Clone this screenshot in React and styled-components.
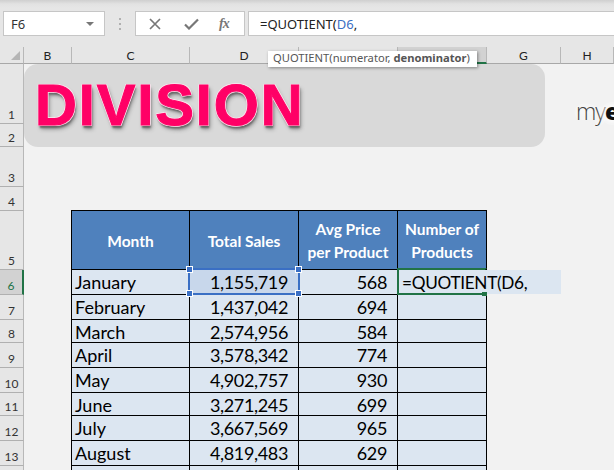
import React from "react";
import styled, { createGlobalStyle } from "styled-components";

const Global = createGlobalStyle`
  html, body { margin: 0; padding: 0; background: #f2f2f2; }
  body { width: 614px; height: 470px; overflow: hidden; font-family: "Lato", "Liberation Sans", sans-serif; }
`;
const Page = styled.div`width: 614px; height: 470px; overflow: hidden; position: relative; display: flex; flex-direction: column;`;
const FormulaStrip = styled.div`
  height: 47px; flex: none; box-sizing: border-box; padding: 11px 0 11px 3px; display: flex; align-items: stretch;
  background: linear-gradient(#cfcfcf 0, #e2e2e2 4px, #e6e6e6 8px);
`;
const Field = styled.div`
  box-sizing: border-box; background: #fff; border: 1px solid #c6c6c6; display: flex; align-items: center;
  font-family: "Noto Sans", sans-serif; font-size: 13px; color: #333;
`;
const NameBox = styled(Field)`width: 102px; padding: 0 7px 0 7px; justify-content: space-between;`;
const Caret = styled.span`width: 0; height: 0; border-left: 4px solid transparent; border-right: 4px solid transparent; border-top: 4px solid #777; margin-right: 3px;`;
const Grip = styled.div`width: 30px; display: flex; align-items: center; justify-content: center; flex: none;`;
const FxBox = styled(Field)`width: 110px; padding: 0 0 0 13px; gap: 0;`;
const FxSlot = styled.span`width: 36px; display: flex; justify-content: flex-start;`;
const CheckSlot = styled(FxSlot)`margin-left: -1px; width: 35px;`;
const FxLabel = styled.span`font-family: "Liberation Serif", serif; font-style: italic; font-weight: 700; font-size: 14px; color: #777; letter-spacing: -1px; margin-left: 0;`;
const FormulaBox = styled(Field)`flex: 1; margin-left: 3px; border-right: 0; padding-left: 11px; color: #222;`;
const Ref = styled.span`color: #3b6fc4;`;

const Sheet = styled.div`
  flex: 1; display: grid; position: relative;
  grid-template-columns: 24px 48px 118px 109px 99px 89px 74px 53px;
  grid-template-rows: 17px 60px 23px 40px 24px 59px 25px 25px 23px 25px 25px 23px 25px 25px 25px;
`;
const Corner = styled.div`background: #e6e6e6; border-right: 1px solid #b8b8b8; border-bottom: 1px solid #a8a8a8; position: relative; box-sizing: border-box;
  &::after { content: ""; position: absolute; right: 3px; bottom: 3px; border-left: 9px solid transparent; border-bottom: 9px solid #b5b5b5; }
`;
const ColHead = styled.div`
  background: ${p => p.$active ? "#d2d2d2" : "#e6e6e6"};
  box-sizing: border-box; border-bottom: ${p => p.$active ? "2px solid #217346" : "1px solid #a8a8a8"};
  border-right: 1px solid #b8b8b8; font-size: 12px; color: #222; display: flex; align-items: center; justify-content: center;
  font-family: "Lato", sans-serif;
`;
const RowHead = styled.div`
  grid-column: 1; background: ${p => p.$active ? "#d2d2d2" : "#e6e6e6"}; color: ${p => p.$active ? "#217346" : "#333"};
  box-sizing: border-box; border-bottom: 1px solid #b0b0b0; border-right: ${p => p.$active ? "2px solid #217346" : "1px solid #b8b8b8"};
  font-size: 12px; display: flex; align-items: flex-end; justify-content: center; padding-bottom: 1px; line-height: 15px;
`;
const Banner = styled.div`
  grid-column: 2 / 8; grid-row: 2 / 4; width: 521px; background: #d9d9d9; border-radius: 14px;
  display: flex; align-items: center; box-sizing: border-box; padding: 0 0 1px 11px;
`;
const Title = styled.span`
  font-family: "Liberation Sans", sans-serif; font-weight: 700; font-size: 58px; line-height: 60px; color: #ff0066; letter-spacing: 1.85px;
  -webkit-text-stroke: 1px #ff0066;
  text-shadow:
    1px 0 #fbe3ec, -1px 0 #fbe3ec, 0 1px #f4d0de, 0 -1px #fbe3ec,
    1px 1px #f4d0de, -1px -1px #fbe3ec, 1px -1px #fbe3ec, -1px 1px #f4d0de,
    1px 3px 2px #666, 2px 4px 4px #8b8b8b;
`;
const LogoCell = styled.div`grid-column: 8; grid-row: 2 / 4; overflow: hidden; padding: 33px 0 0 15px;`;
const Logo = styled.span`
  font-family: "Open Sans", sans-serif; font-size: 23px; font-weight: 300; color: #444; letter-spacing: -1px; line-height: 28px; white-space: nowrap;
  text-shadow: 0 0 8px #fff, 0 0 8px #fff, 0 0 10px #fff;
  b { font-weight: 800; color: #111; }
`;
const HeadCell = styled.div`
  background: #4f81bd; color: #fff; font-weight: 700; font-size: 15.5px; line-height: 23px; text-align: center;
  box-sizing: border-box; border: 1px solid #000; border-left: ${p => p.$first ? "1px solid #000" : "0"};
  display: flex; align-items: center; justify-content: center; grid-row: 6; grid-column: ${p => p.$col}; padding-top: 2px;
  margin: -1px 0 0 ${p => p.$first ? "-1px" : "0"};
`;
const Cell = styled.div`
  background: ${p => p.$sel ? "#c8d7eb" : "#dce6f1"}; color: #000; font-size: 18px; line-height: 25px;
  box-sizing: border-box; border-right: 1px solid #000; border-bottom: 1px solid #000;
  border-left: ${p => p.$first ? "1px solid #000" : "0"}; grid-column: ${p => p.$col}; grid-row: ${p => p.$row};
  text-align: ${p => p.$right ? "right" : "left"}; padding: 0 ${p => p.$right ? "10px" : "3px"}; white-space: nowrap; overflow: hidden;
  letter-spacing: ${p => p.$right ? "-0.35px" : "0"}; margin-left: ${p => p.$first ? "-1px" : "0"};
`;
const Editing = styled.div`
  grid-column: 6 / 8; grid-row: 7; width: 163px; background: #dce6f1; color: #000; font-size: 17.2px; line-height: 25px; letter-spacing: -0.3px;
  box-sizing: border-box; padding-left: 4px; white-space: nowrap; height: 24px; margin-top: 0; z-index: 2; position: relative;
`;
const GreenFrame = styled.div`position: absolute; left: 397px; top: 221px; width: 90px; height: 27px; box-sizing: border-box; border: 2px solid #217346; border-right-color: transparent; z-index: 3; pointer-events: none;
  &::after { content: ""; position: absolute; right: -2px; bottom: -3px; width: 5px; height: 4px; background: #217346; }
`;
const BlueFrame = styled.div`position: absolute; left: 188px; top: 221px; width: 112px; height: 27px; box-sizing: border-box; border: 2px solid #3a6fc4; z-index: 3;`;
const Handle = styled.span`position: absolute; width: 5px; height: 5px; background: #3a6fc4; border: 1px solid #fff;
  ${p => p.$top ? "top: -4px;" : "bottom: -4px;"} ${p => p.$left ? "left: -4px;" : "right: -4px;"}`;
const Tip = styled.div`
  position: absolute; left: 268px; top: 4px; height: 16px; width: 209px; box-sizing: border-box; background: #fff; z-index: 5; white-space: nowrap;
  font-family: "Noto Sans", sans-serif; font-size: 11.2px; line-height: 14px; color: #555; padding-left: 5px; box-shadow: 1px 1px 3px rgba(0,0,0,.4);
  b { font-weight: 700; }
`;

const ColLabels = ["B", "C", "D", "E", "F", "G", "H"];
const Rows = [
  ["January", "1,155,719", "568"], ["February", "1,437,042", "694"], ["March", "2,574,956", "584"],
  ["April", "3,578,342", "774"], ["May", "4,902,757", "930"], ["June", "3,271,245", "699"],
  ["July", "3,667,569", "965"], ["August", "4,819,483", "629"],
];

export default function App() {
  return (
    <Page>
      <Global />
      <FormulaStrip>
        <NameBox>F6<Caret /></NameBox>
        <Grip>
          <svg width="4" height="12" viewBox="0 0 4 12"><g fill="#b0b0b0"><rect x="1" y="0" width="2" height="2" /><rect x="1" y="5" width="2" height="2" /><rect x="1" y="10" width="2" height="2" /></g></svg>
        </Grip>
        <FxBox>
          <FxSlot><svg width="12" height="12" viewBox="0 0 12 12"><path d="M1 1l10 10M11 1L1 11" stroke="#777" strokeWidth="1.7" fill="none" /></svg></FxSlot>
          <CheckSlot><svg width="15" height="12" viewBox="0 0 15 12"><path d="M1 6.5l4 4L14 1.5" stroke="#777" strokeWidth="2.2" fill="none" /></svg></CheckSlot>
          <FxLabel>fx</FxLabel>
        </FxBox>
        <FormulaBox>=QUOTIENT(<Ref>D6</Ref>,</FormulaBox>
      </FormulaStrip>
      <Sheet>
        <Corner />
        {ColLabels.map(c => <ColHead key={c} $active={c === "F"}>{c}</ColHead>)}
        {[1, 2, 3, 4, 5, 6, 7, 8, 9, 10, 11, 12, 13].map(n => (
          <RowHead key={n} $active={n === 6} style={{ gridRow: n + 1 }}>{n}</RowHead>
        ))}
        <RowHead style={{ gridRow: 15 }} />
        <Banner><Title>DIVISION</Title></Banner>
        <LogoCell><Logo>my<b>e</b></Logo></LogoCell>
        <HeadCell $first $col={3}>Month</HeadCell>
        <HeadCell $col={4}>Total Sales</HeadCell>
        <HeadCell $col={5}>Avg Price<br />per Product</HeadCell>
        <HeadCell $col={6}>Number of<br />Products</HeadCell>
        {Rows.map((r, i) => (
          <React.Fragment key={r[0]}>
            <Cell $first $col={3} $row={i + 7}>{r[0]}</Cell>
            <Cell $right $col={4} $row={i + 7} $sel={i === 0}>{r[1]}</Cell>
            <Cell $right $col={5} $row={i + 7}>{r[2]}</Cell>
            <Cell $col={6} $row={i + 7} />
          </React.Fragment>
        ))}
        <Cell $first $col={3} $row={15} />
        <Cell $col={4} $row={15} />
        <Cell $col={5} $row={15} />
        <Cell $col={6} $row={15} />
        <Editing>=QUOTIENT(D6,</Editing>
        <BlueFrame>
          <Handle $top $left /><Handle $top /><Handle $left /><Handle />
        </BlueFrame>
        <GreenFrame />
        <Tip>QUOTIENT(numerator, <b>denominator</b>)</Tip>
      </Sheet>
    </Page>
  );
}
